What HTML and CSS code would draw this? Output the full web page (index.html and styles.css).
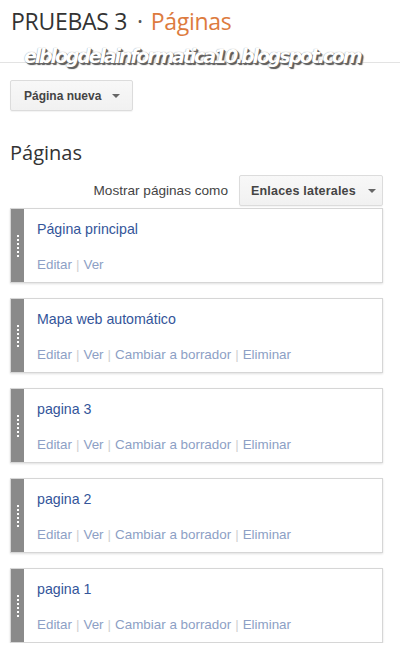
FILE: index.html
```html
<!DOCTYPE html>
<html lang="es">
<head>
<meta charset="utf-8">
<title>Páginas</title>
<link rel="stylesheet" href="styles.css">
</head>
<body>
<div class="page">
  <header class="top">
    <h1 class="title"><span class="blog">PRUEBAS 3</span><span class="dot">·</span><span class="section">Páginas</span></h1>
    <div class="watermark">elblogdelainformatica10.blogspot.com</div>
  </header>
  <div class="toolbar">
    <button class="btn">Página nueva <span class="caret"></span></button>
  </div>
  <h2 class="heading">Páginas</h2>
  <div class="display-row">
    <span class="display-label">Mostrar páginas como</span>
    <button class="btn btn-wide">Enlaces laterales <span class="caret"></span></button>
  </div>
  <ul class="cards">
    <li class="card">
      <div class="handle"><span class="dots"></span></div>
      <div class="card-body">
        <a class="card-title">Página principal</a>
        <div class="actions"><a>Editar</a><span class="sep">|</span><a>Ver</a></div>
      </div>
    </li>
    <li class="card">
      <div class="handle"><span class="dots"></span></div>
      <div class="card-body">
        <a class="card-title">Mapa web automático</a>
        <div class="actions"><a>Editar</a><span class="sep">|</span><a>Ver</a><span class="sep">|</span><a>Cambiar a borrador</a><span class="sep">|</span><a>Eliminar</a></div>
      </div>
    </li>
    <li class="card">
      <div class="handle"><span class="dots"></span></div>
      <div class="card-body">
        <a class="card-title">pagina 3</a>
        <div class="actions"><a>Editar</a><span class="sep">|</span><a>Ver</a><span class="sep">|</span><a>Cambiar a borrador</a><span class="sep">|</span><a>Eliminar</a></div>
      </div>
    </li>
    <li class="card">
      <div class="handle"><span class="dots"></span></div>
      <div class="card-body">
        <a class="card-title">pagina 2</a>
        <div class="actions"><a>Editar</a><span class="sep">|</span><a>Ver</a><span class="sep">|</span><a>Cambiar a borrador</a><span class="sep">|</span><a>Eliminar</a></div>
      </div>
    </li>
    <li class="card">
      <div class="handle"><span class="dots"></span></div>
      <div class="card-body">
        <a class="card-title">pagina 1</a>
        <div class="actions"><a>Editar</a><span class="sep">|</span><a>Ver</a><span class="sep">|</span><a>Cambiar a borrador</a><span class="sep">|</span><a>Eliminar</a></div>
      </div>
    </li>
  </ul>
</div>
</body>
</html>
```
FILE: styles.css
```css
* { box-sizing: border-box; }
html, body { margin: 0; padding: 0; background: #fff; }
body { font-family: "Liberation Sans", Arial, sans-serif; color: #333; }
.page { width: 400px; }

.top {
  position: relative;
  height: 63px;
  border-bottom: 1px solid #e3e3e3;
  padding: 6px 0 0 11px;
}
.title {
  margin: 0;
  font-family: "Open Sans", sans-serif;
  font-weight: 400;
  font-size: 23px;
  line-height: 30px;
  color: #333;
  letter-spacing: -0.3px;
}
.dot { margin: 0 8px 0 10px; color: #555; }
.section { color: #dd7b3e; }

.watermark {
  position: absolute;
  left: 24px;
  top: 45px;
  font-family: "DejaVu Sans", sans-serif;
  font-weight: 700;
  font-style: italic;
  font-size: 19px;
  letter-spacing: -2.15px;
  color: #fff;
  text-shadow: 1px 1px 0 #666, 2px 2px 1px #555, 0 0 1px #888;
  white-space: nowrap;
}

.toolbar { padding: 17px 0 0 10px; }
.btn {
  display: inline-flex;
  align-items: center;
  height: 31px;
  padding: 0 12px 0 13px;
  border: 1px solid #dcdcdc;
  border-radius: 2px;
  background: linear-gradient(#f8f8f8, #f1f1f1);
  font-family: "Liberation Sans", Arial, sans-serif;
  font-weight: 700;
  font-size: 12px;
  color: #444;
  white-space: nowrap;
  box-shadow: 0 1px 1px rgba(0,0,0,0.05);
}
.caret {
  display: inline-block;
  width: 0; height: 0;
  margin-left: 11px;
  border-left: 4px solid transparent;
  border-right: 4px solid transparent;
  border-top: 4px solid #666;
}

.heading {
  margin: 27px 0 0 10px;
  font-family: "Open Sans", sans-serif;
  font-weight: 400;
  font-size: 20px;
  line-height: 30px;
  color: #333;
}

.display-row {
  display: flex;
  justify-content: flex-end;
  align-items: center;
  gap: 11px;
  padding: 7px 17px 0 0;
}
.display-label { font-size: 13.6px; color: #444; }
.btn-wide { width: 144px; padding: 0 10px 0 11px; font-size: 12.5px; letter-spacing: 0.2px; }
.btn-wide .caret { margin-left: 12px; }

.cards {
  list-style: none;
  margin: 2px 0 0 10px;
  padding: 0;
  width: 373px;
  display: flex;
  flex-direction: column;
  gap: 15px;
}
.card {
  display: flex;
  height: 75px;
  border: 1px solid #d6d6d6;
  background: #fff;
  box-shadow: 0 1px 2px rgba(0,0,0,0.12);
}
.handle {
  width: 13px;
  flex: none;
  background: #8a8a8a;
  display: flex;
  align-items: center;
  justify-content: center;
}
.dots {
  width: 2px;
  height: 22px;
  background: repeating-linear-gradient(#fff 0 2px, transparent 2px 4px);
}
.card-body {
  padding: 11px 0 0 13px;
  display: flex;
  flex-direction: column;
}
.card-title {
  font-size: 14.2px;
  line-height: 18px;
  color: #34559a;
}
.actions {
  margin-top: 19px;
  font-size: 13.4px;
  line-height: 16px;
  color: #8d9fc5;
}
.sep { color: #d0d0d0; margin: 0 4px; }
```
